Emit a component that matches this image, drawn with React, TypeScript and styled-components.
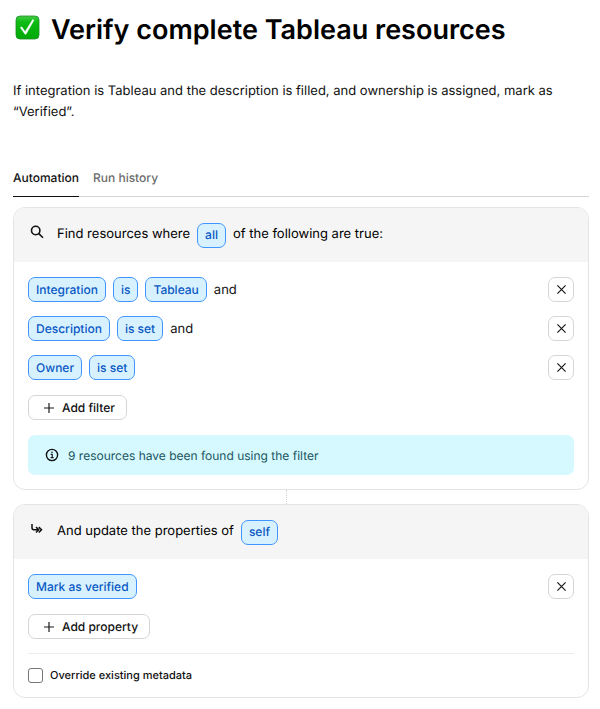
import React from "react";
import styled, { createGlobalStyle } from "styled-components";

const GlobalStyle = createGlobalStyle`
  *, *::before, *::after { box-sizing: border-box; }
  body {
    margin: 0;
    background: #fff;
    color: #111;
    font-family: Inter, "Liberation Sans", sans-serif;
    font-size: 13px;
    text-rendering: geometricPrecision;
  }
  button, input { font: inherit; color: inherit; text-rendering: inherit; }
`;

const Page = styled.main`
  padding: 12px 11px 11px 13px;
`;

const Title = styled.h1`
  display: flex;
  align-items: center;
  gap: 11px;
  margin: 0;
  padding-left: 2px;
  color: #000;
  font-size: 27px;
  font-weight: 600;
  line-height: 36px;
  svg { flex: none; margin-bottom: 5px; }
`;

const Description = styled.p`
  margin: 33px 0 0;
  line-height: 21px;
`;

const Tabs = styled.div`
  display: flex;
  gap: 14px;
  margin-top: 46px;
  border-bottom: 1px solid #d5d5d5;
`;

const Tab = styled.button<{ $active?: boolean }>`
  height: 28px;
  margin-bottom: -1px;
  padding: 0 0 9px;
  border: 0;
  border-bottom: 1px solid ${(p) => (p.$active ? "#111" : "transparent")};
  background: none;
  color: ${(p) => (p.$active ? "#111" : "#6b6b6b")};
  font-size: 12px;
  font-weight: 500;
  line-height: 18px;
`;

const Card = styled.section`
  border: 1px solid #e4e4e4;
  border-radius: 12px;
  overflow: hidden;
  background: #fff;
`;

const FirstCard = styled(Card)`
  margin-top: 10px;
`;

const Connector = styled.div`
  width: 1px;
  height: 14px;
  margin-left: calc(50% - 15px);
  border-left: 1px dotted #d4d4d4;
`;

const CardHeader = styled.header`
  display: flex;
  align-items: center;
  gap: 12px;
  height: 54px;
  padding: 0 15px;
  background: #f5f5f5;
  > svg { flex: none; margin-bottom: 6px; }
`;

const Sentence = styled.h2`
  display: flex;
  align-items: center;
  gap: 7px;
  margin: 0;
  color: #000;
  font-size: 13px;
  font-weight: 400;
  line-height: 18px;
  span { margin-bottom: 3px; }
`;

const CardBody = styled.div`
  padding: 15px 14px 14px;
`;

const Rows = styled.div`
  display: grid;
  gap: 14px;
  margin-bottom: 15px;
`;

const Row = styled.div`
  display: flex;
  align-items: center;
  gap: 7px;
`;

const Chip = styled.button`
  height: 25px;
  padding: 0 7px;
  border: 1px solid #4096ff;
  border-radius: 7px;
  background: #d8f1ff;
  color: #0958c4;
  font-size: 12px;
  font-weight: 500;
  line-height: 18px;
`;

const OutlineButton = styled.button`
  display: flex;
  align-items: center;
  justify-content: center;
  gap: 7px;
  height: 25px;
  border: 1px solid #d6d6d6;
  border-radius: 7px;
  background: #fff;
`;

const RemoveButton = styled(OutlineButton)`
  width: 26px;
  margin-left: auto;
  padding: 0;
`;

const AddButton = styled(OutlineButton)`
  padding: 0 11px 0 14px;
  font-size: 12px;
  font-weight: 500;
`;

const Notice = styled.div`
  display: flex;
  align-items: center;
  gap: 9px;
  height: 40px;
  margin-top: 15px;
  padding: 0 17px;
  border-radius: 7px;
  background: #d5f9fe;
  color: #1b565e;
  font-size: 12px;
`;

const Footer = styled.div`
  margin-top: 14px;
  padding-top: 14px;
  border-top: 1px solid #ececec;
`;

const CheckLabel = styled.label`
  display: flex;
  align-items: center;
  gap: 7px;
  font-size: 11px;
  font-weight: 500;
  line-height: 15px;
`;

const Checkbox = styled.input`
  appearance: none;
  width: 15px;
  height: 15px;
  margin: 0;
  border: 1px solid #767676;
  border-radius: 3px;
  background: #fff;
  &:checked { background: #0958c4; }
`;

const CheckEmoji = () => (
  <svg width="25" height="25" viewBox="0 0 25 25" role="img" aria-label="Verified">
    <defs>
      <linearGradient id="tile" x1="0" y1="0" x2="0" y2="1">
        <stop offset="0" stopColor="#48ca48" />
        <stop offset="0.25" stopColor="#0dbc12" />
        <stop offset="1" stopColor="#00a807" />
      </linearGradient>
    </defs>
    <rect x="1" y="1" width="23" height="23" rx="4" fill="url(#tile)" stroke="#169022" strokeWidth="0.8" />
    <path d="M5.3 12.6 6.7 11.8 10.2 16.6 17.6 4.6 19 5.2 11 19.3 10 19.3Z" fill="#fff" stroke="#fff" strokeWidth="0.4" strokeLinejoin="round" />
  </svg>
);

const SearchIcon = () => (
  <svg width="16" height="16" viewBox="0 0 16 16" fill="none" stroke="#111" strokeWidth="1.6" aria-hidden="true">
    <circle cx="6.7" cy="6.5" r="4.2" />
    <path d="m9.8 9.6 4.2 4.2" />
  </svg>
);

const ArrowIcon = () => (
  <svg width="16" height="16" viewBox="0 0 16 16" fill="none" stroke="#111" strokeWidth="1.5" aria-hidden="true">
    <path d="M3 3v3.8q0 2 2 2H9.4M7 6.1l2.7 2.7L7 11.5M9.8 6.1l2.7 2.7-2.7 2.7" />
  </svg>
);

const CloseIcon = () => (
  <svg width="13" height="13" viewBox="0 0 13 13" fill="none" stroke="#1a1a1a" strokeWidth="1.2" aria-hidden="true">
    <path d="m2.4 2.4 8.2 8.2M10.6 2.4l-8.2 8.2" />
  </svg>
);

const PlusIcon = () => (
  <svg width="12" height="12" viewBox="0 0 12 12" fill="none" stroke="#1a1a1a" strokeWidth="1.2" aria-hidden="true">
    <path d="M6 1v10M1 6h10" />
  </svg>
);

const InfoIcon = () => (
  <svg width="14" height="14" viewBox="0 0 14 14" fill="none" stroke="#111" aria-hidden="true">
    <circle cx="7" cy="7" r="5.6" strokeWidth="1.4" />
    <path d="M5.7 6.4h1.5v3M5.6 9.6h3" strokeWidth="1.1" />
    <circle cx="7" cy="4.3" r="0.8" fill="#111" stroke="none" />
  </svg>
);

const filters = [
  { parts: ["Integration", "is", "Tableau"], joined: true },
  { parts: ["Description", "is set"], joined: true },
  { parts: ["Owner", "is set"], joined: false },
];

export default function App() {
  return (
    <>
      <GlobalStyle />
      <Page>
        <Title>
          <CheckEmoji />
          Verify complete Tableau resources
        </Title>
        <Description>
          If integration is Tableau and the description is filled, and ownership is assigned, mark as “Verified”.
        </Description>
        <Tabs role="tablist">
          <Tab role="tab" aria-selected="true" $active>Automation</Tab>
          <Tab role="tab" aria-selected="false">Run history</Tab>
        </Tabs>
        <FirstCard>
          <CardHeader>
            <SearchIcon />
            <Sentence>
              <span>Find resources where</span>
              <Chip>all</Chip>
              <span>of the following are true:</span>
            </Sentence>
          </CardHeader>
          <CardBody>
            <Rows>
              {filters.map((filter) => (
                <Row key={filter.parts[0]}>
                  {filter.parts.map((part) => (
                    <Chip key={part}>{part}</Chip>
                  ))}
                  {filter.joined && <span>and</span>}
                  <RemoveButton aria-label={`Remove ${filter.parts[0]} filter`}>
                    <CloseIcon />
                  </RemoveButton>
                </Row>
              ))}
            </Rows>
            <AddButton>
              <PlusIcon />
              Add filter
            </AddButton>
            <Notice role="status">
              <InfoIcon />
              9 resources have been found using the filter
            </Notice>
          </CardBody>
        </FirstCard>
        <Connector />
        <Card>
          <CardHeader>
            <ArrowIcon />
            <Sentence>
              <span>And update the properties of</span>
              <Chip>self</Chip>
            </Sentence>
          </CardHeader>
          <CardBody>
            <Rows>
              <Row>
                <Chip>Mark as verified</Chip>
                <RemoveButton aria-label="Remove Mark as verified">
                  <CloseIcon />
                </RemoveButton>
              </Row>
            </Rows>
            <AddButton>
              <PlusIcon />
              Add property
            </AddButton>
            <Footer>
              <CheckLabel>
                <Checkbox type="checkbox" />
                Override existing metadata
              </CheckLabel>
            </Footer>
          </CardBody>
        </Card>
      </Page>
    </>
  );
}
